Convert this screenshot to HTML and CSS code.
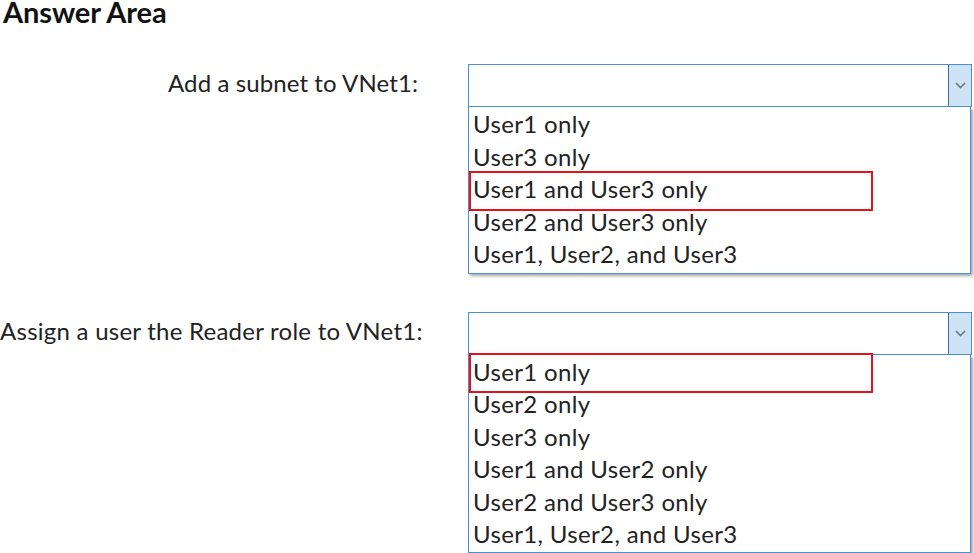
FILE: index.html
```html
<!DOCTYPE html>
<html>
<head>
<meta charset="utf-8">
<link rel="stylesheet" href="styles.css">
</head>
<body>
<div class="page">
  <h1 class="title">Answer Area</h1>

  <div class="row row-first">
    <div class="label">Add a subnet to VNet1:</div>
    <div class="dropdown">
      <div class="select">
        <div class="select-value"></div>
        <div class="arrow">
          <svg width="11" height="7" viewBox="0 0 11 7"><path d="M1 1 L5.5 5.5 L10 1" fill="none" stroke="#6b7a89" stroke-width="1.6"/></svg>
        </div>
      </div>
      <ul class="list">
        <li class="item">User1 only</li>
        <li class="item">User3 only</li>
        <li class="item selected">User1 and User3 only</li>
        <li class="item">User2 and User3 only</li>
        <li class="item">User1, User2, and User3</li>
      </ul>
    </div>
  </div>

  <div class="row row-second">
    <div class="label">Assign a user the Reader role to VNet1:</div>
    <div class="dropdown">
      <div class="select">
        <div class="select-value"></div>
        <div class="arrow">
          <svg width="11" height="7" viewBox="0 0 11 7"><path d="M1 1 L5.5 5.5 L10 1" fill="none" stroke="#6b7a89" stroke-width="1.6"/></svg>
        </div>
      </div>
      <ul class="list list-six">
        <li class="item selected">User1 only</li>
        <li class="item">User2 only</li>
        <li class="item">User3 only</li>
        <li class="item">User1 and User2 only</li>
        <li class="item">User2 and User3 only</li>
        <li class="item">User1, User2, and User3</li>
      </ul>
    </div>
  </div>
</div>
</body>
</html>
```

FILE: styles.css
```css
html, body {
  margin: 0;
  padding: 0;
  background: #ffffff;
}

.page {
  font-family: Lato, "Liberation Sans", sans-serif;
  color: #222222;
  width: 974px;
  height: 553px;
  overflow: hidden;
}

.title {
  margin: 0 0 0 3px;
  font-size: 29px;
  line-height: 24px;
  font-weight: 700;
  color: #111111;
  letter-spacing: -0.1px;
}

.row {
  display: flex;
  align-items: flex-start;
}

.row-first {
  margin-top: 40px;
}

.row-second {
  margin-top: 38px;
}

.label {
  width: 468px;
  box-sizing: border-box;
  text-align: right;
  font-size: 24px;
  letter-spacing: 0.1px;
  height: 43px;
  line-height: 38px;
  white-space: nowrap;
}

.row-first .label {
  padding-right: 50px;
}

.row-second .label {
  padding-right: 46px;
  letter-spacing: 0.25px;
}

.dropdown {
  width: 504px;
}

.select {
  display: flex;
  height: 43px;
  box-sizing: border-box;
  border: 1.5px solid #4a8fd8;
  background: #ffffff;
}

.select-value {
  flex: 1;
}

.arrow {
  width: 22px;
  background: #cfe3f6;
  border-left: 1.5px solid #3f6f9f;
  display: flex;
  align-items: center;
  justify-content: center;
}

.list {
  list-style: none;
  margin: 0;
  padding: 1px 0 2px 0;
  width: 503px;
  box-sizing: border-box;
  border: 1.5px solid #4a8fd8;
  border-top: none;
  background: #ffffff;
  box-shadow: 2px 2px 3px rgba(0, 0, 0, 0.35);
}

.list-six {
  padding: 1px 0 1px 0;
}

.item {
  position: relative;
  height: 32.5px;
  line-height: 31px;
  padding-left: 4px;
  font-size: 24px;
  letter-spacing: 0.35px;
  white-space: nowrap;
}

.selected::after {
  content: "";
  position: absolute;
  left: 0;
  top: -2px;
  width: 404px;
  height: 40px;
  box-sizing: border-box;
  border: 2px solid #e3121b;
}

.list-six .selected::after {
  top: -3px;
}
```
